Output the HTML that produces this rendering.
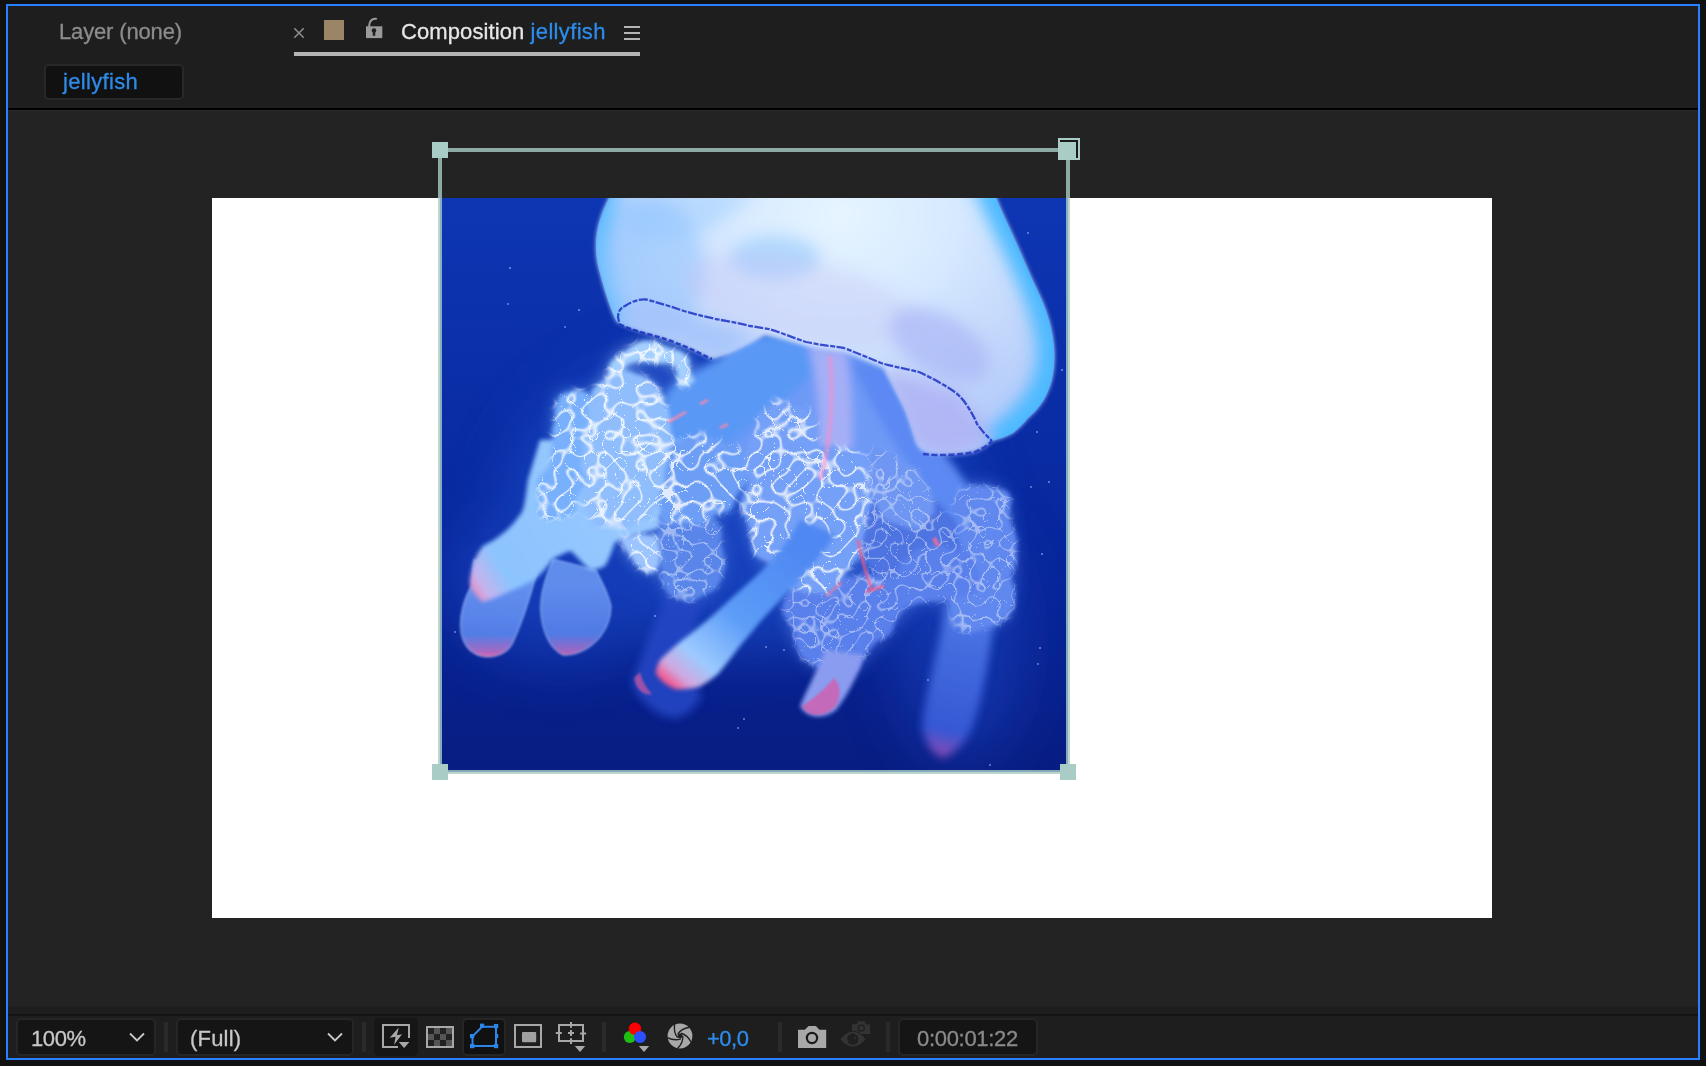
<!DOCTYPE html>
<html lang="en">
<head>
<meta charset="utf-8">
<title>Composition jellyfish</title>
<style>
html,body{margin:0;padding:0;}
body{width:1706px;height:1066px;background:#111111;overflow:hidden;position:relative;font-family:"Liberation Sans",sans-serif;}
.abs{position:absolute;}
#panel{left:6px;top:4px;width:1690px;height:1052px;border:2px solid #2680ff;background:#1e1e1e;}
#hline{left:8px;top:108px;width:1690px;height:2px;background:#000;}
#viewer{left:8px;top:110px;width:1690px;height:896px;background:#232323;}
#tbline{left:8px;top:1014px;width:1690px;height:2px;background:#141414;}
.t{position:absolute;white-space:nowrap;font-size:22px;line-height:26px;-webkit-text-stroke:0.3px currentColor;will-change:transform;}
#comp{left:212px;top:198px;width:1280px;height:720px;background:#ffffff;}
.box{position:absolute;box-sizing:border-box;border:2px solid #262626;border-radius:5px;background:#151515;}
.sep{position:absolute;width:4px;top:1022px;height:30px;background:#2a2a2a;}
.h{position:absolute;width:16px;height:16px;background:#a9ccc6;}
</style>
</head>
<body>
<div id="panel" class="abs"></div>

<!-- tab row -->
<div class="t" id="t_layer" style="left:59px;top:19px;color:#8c8c8c;letter-spacing:-0.15px;">Layer (none)</div>
<svg class="abs" style="left:290px;top:24px;" width="18" height="18" viewBox="290 24 18 18"><path d="M294.3 28.3 L303.7 37.7 M303.7 28.3 L294.3 37.7" stroke="#8c8c8c" stroke-width="1.6" fill="none"/></svg>
<div class="abs" style="left:324px;top:20px;width:20px;height:20px;background:#9a8666;"></div>
<svg class="abs" id="lock" style="left:364px;top:16px;" width="20" height="24" viewBox="364 16 20 24">
<path d="M369.3 27 V24.5 A6 6 0 0 1 376.9 18.9" stroke="#9a9a9a" stroke-width="2" fill="none"/>
<rect x="366" y="26.3" width="16.3" height="11.8" fill="#9a9a9a"/>
<circle cx="374" cy="30.5" r="2.3" fill="#1f1f1f"/><path d="M373 31 L372.6 35.8 H375.4 L375 31 Z" fill="#1f1f1f"/>
</svg>
<div class="t" id="t_comp" style="left:401px;top:19px;color:#e6e6e6;letter-spacing:0.1px;">Composition <span id="t_compj" style="color:#2d8ceb;letter-spacing:0.34px;">jellyfish</span></div>
<div class="abs" style="left:624px;top:26px;width:16px;height:2px;background:#b4b4b4;"></div>
<div class="abs" style="left:624px;top:32px;width:16px;height:2px;background:#b4b4b4;"></div>
<div class="abs" style="left:624px;top:38px;width:16px;height:2px;background:#b4b4b4;"></div>
<div class="abs" style="left:294px;top:52px;width:346px;height:4px;background:#b4b4b4;"></div>

<!-- breadcrumb -->
<div class="box" style="left:44px;top:64px;width:140px;height:36px;background:#111111;border-color:#282828;"></div>
<div class="t" id="t_jelly" style="left:62.5px;top:69px;color:#2d8ceb;letter-spacing:0.34px;">jellyfish</div>

<div id="hline" class="abs"></div>
<div id="viewer" class="abs"></div>
<div class="abs" style="left:8px;top:110px;width:1690px;height:1px;background:#2a2a2a;"></div>
<div id="comp" class="abs"></div>

<!-- IMAGE -->
<svg class="abs" id="img" style="left:440px;top:198px;" width="628" height="574" viewBox="440 198 628 574">
<defs>
<linearGradient id="bgG" x1="0" y1="0" x2="0" y2="1"><stop offset="0" stop-color="#0e36b3"/><stop offset="0.45" stop-color="#092ba3"/><stop offset="0.65" stop-color="#08259a"/><stop offset="1" stop-color="#081d82"/></linearGradient>
<radialGradient id="bellG" gradientUnits="userSpaceOnUse" cx="840" cy="215" r="330" gradientTransform="translate(840 215) scale(1 0.85) translate(-840 -215)">
<stop offset="0" stop-color="#e6f5ff"/><stop offset="0.35" stop-color="#d6e9ff"/><stop offset="0.6" stop-color="#c6dafc"/><stop offset="0.85" stop-color="#b4ccfb"/><stop offset="1" stop-color="#a8c4fa"/></radialGradient>
<linearGradient id="armAG" gradientUnits="userSpaceOnUse" x1="640" y1="500" x2="476" y2="600"><stop offset="0" stop-color="#98c8fe"/><stop offset="0.8" stop-color="#8cc4fe"/><stop offset="0.93" stop-color="#c4b4ee"/><stop offset="1" stop-color="#e888bc"/></linearGradient>
<linearGradient id="armBG" gradientUnits="userSpaceOnUse" x1="790" y1="540" x2="668" y2="682"><stop offset="0" stop-color="#4f88f2"/><stop offset="0.5" stop-color="#5c9cf8"/><stop offset="0.8" stop-color="#9ccaff"/><stop offset="0.93" stop-color="#d0a8e0"/><stop offset="1" stop-color="#f05a90"/></linearGradient>
<linearGradient id="armDG" gradientUnits="userSpaceOnUse" x1="970" y1="620" x2="940" y2="758"><stop offset="0" stop-color="#4a74e4"/><stop offset="0.8" stop-color="#3558d4"/><stop offset="1" stop-color="#9048b0"/></linearGradient>
<linearGradient id="footG" gradientUnits="userSpaceOnUse" x1="0" y1="585" x2="0" y2="656"><stop offset="0" stop-color="#6a98f4"/><stop offset="0.7" stop-color="#5a84ec"/><stop offset="0.93" stop-color="#b070c8"/><stop offset="1" stop-color="#e868b0"/></linearGradient>
<filter id="b1" x="-20%" y="-20%" width="140%" height="140%"><feGaussianBlur stdDeviation="1.2"/></filter>
<filter id="b2" x="-20%" y="-20%" width="140%" height="140%"><feGaussianBlur stdDeviation="2"/></filter>
<filter id="b4" x="-20%" y="-20%" width="140%" height="140%"><feGaussianBlur stdDeviation="4"/></filter>
<filter id="b8" x="-30%" y="-30%" width="160%" height="160%"><feGaussianBlur stdDeviation="8"/></filter>
<filter id="b30" x="-50%" y="-50%" width="200%" height="200%"><feGaussianBlur stdDeviation="30"/></filter>
<filter id="rough" x="-10%" y="-10%" width="120%" height="120%" color-interpolation-filters="sRGB">
<feTurbulence type="fractalNoise" baseFrequency="0.045" numOctaves="1" seed="11" result="n"/>
<feDisplacementMap in="SourceGraphic" in2="n" scale="18" xChannelSelector="R" yChannelSelector="G" result="d"/>
<feGaussianBlur in="d" stdDeviation="2"/>
</filter>
<filter id="veins" x="-10%" y="-10%" width="120%" height="120%" color-interpolation-filters="sRGB">
<feTurbulence type="fractalNoise" baseFrequency="0.045" numOctaves="1" seed="11" result="n"/>
<feDisplacementMap in="SourceGraphic" in2="n" scale="18" xChannelSelector="R" yChannelSelector="G" result="d"/>
<feGaussianBlur in="d" stdDeviation="3" result="db"/>
<feTurbulence type="turbulence" baseFrequency="0.068" numOctaves="1" seed="7" result="t"/>
<feColorMatrix in="t" type="matrix" values="0 0 0 0 1  0 0 0 0 1  0 0 0 0 1  -13 0 0 0 1.0" result="v"/>
<feComposite in="v" in2="db" operator="in"/>
</filter>
<filter id="veinsL" x="-10%" y="-10%" width="120%" height="120%" color-interpolation-filters="sRGB">
<feTurbulence type="fractalNoise" baseFrequency="0.045" numOctaves="1" seed="11" result="n"/>
<feDisplacementMap in="SourceGraphic" in2="n" scale="18" xChannelSelector="R" yChannelSelector="G" result="d"/>
<feGaussianBlur in="d" stdDeviation="3" result="db"/>
<feTurbulence type="turbulence" baseFrequency="0.06" numOctaves="1" seed="7" result="t"/>
<feColorMatrix in="t" type="matrix" values="0 0 0 0 1  0 0 0 0 1  0 0 0 0 1  -8.5 0 0 0 1.0" result="v"/>
<feComposite in="v" in2="db" operator="in"/>
</filter>
<g id="frLight">
<path d="M600 378 C600 352 622 340 646 340 C670 340 688 352 689 378 L676 384 C672 366 660 358 646 358 C630 358 618 366 616 384 Z" fill="#a4d0ff"/>
<path d="M552 392 C560 386 575 386 586 398 C584 420 580 450 576 480 C574 495 572 505 568 510 C555 518 540 518 530 508 C530 490 538 465 548 440 C548 425 548 405 552 392 Z" fill="#78b0fc"/>
<path d="M584 390 C592 374 612 368 630 372 C645 374 655 382 660 395 C664 410 664 425 665 450 C664 475 658 495 650 508 C636 522 610 526 590 520 C578 510 574 490 576 465 C578 440 580 410 586 394 Z" fill="#90befd"/>
<path d="M662 442 C680 432 710 430 735 445 C742 465 738 485 725 502 C705 518 680 526 655 522 C652 510 660 480 662 442 Z" fill="#6c9ef6"/>
<path d="M612 534 C620 550 630 566 646 568 C655 560 652 545 648 532 Z" fill="#9cc4ff"/>
<path d="M770 396 C750 410 738 440 738 470 C736 500 740 525 748 545 C760 570 780 588 800 592 C825 590 848 570 856 540 C862 510 868 480 862 455 C850 440 830 445 815 440 C812 420 800 400 770 396 Z" fill="#74a0f7"/>
</g>
<g id="frMid">
<path d="M852 505 C870 490 900 488 930 500 C950 510 960 535 960 560 C955 580 940 592 915 590 C890 588 870 575 858 555 C850 540 848 520 852 505 Z" fill="#4e74e2"/>
<path d="M958 488 C950 500 955 520 962 535 C956 560 950 590 946 614 C955 634 985 638 1008 616 C1018 580 1016 545 1010 515 C1012 500 1005 488 990 484 C978 482 966 484 958 488 Z" fill="#6088ee"/>
<path d="M790 586 C782 610 788 640 805 660 C820 672 840 676 852 674 C868 655 890 630 915 602 C935 604 965 600 978 585 C980 565 965 548 940 545 C915 545 900 560 893 578 C860 572 820 575 790 586 Z" fill="#5a80ec"/>
<path d="M660 514 C652 540 655 575 668 598 C685 610 708 600 720 580 C728 555 725 530 712 515 C695 505 675 506 660 514 Z" fill="#5a86ea"/>
<path d="M868 450 C862 470 866 500 880 520 C900 535 925 530 935 512 C930 490 915 465 895 452 Z" fill="#6f96f2"/>
</g>
<clipPath id="bellClip"><path id="bellP" d="M609 170 L609 198 C602 212 596 228 596 245 C596 258 598 266 600 273 C603 285 606 294 609 303 C612 311 614 317 617 322 C626 327 636 330 646 333 C660 337 672 341 684 346 C694 350 703 355 712 359 C722 356 732 352 740 348 C750 343 758 339 765 335 C780 338 793 342 806 346 C820 349 832 350 844 352 C857 357 870 362 883 368 C891 382 898 396 905 410 C909 420 912 430 915 440 C917 446 920 450 925 452 C931 455 939 455 947 455 C957 455 967 454 975 452 C982 449 988 445 992 441 C1000 439 1007 436 1013 433 C1019 428 1024 423 1028 418 C1034 413 1039 407 1043 401 C1046 396 1048 391 1050 386 C1054 374 1055 360 1054 348 C1053 335 1050 322 1046 311 C1042 299 1036 288 1031 277 C1025 263 1019 249 1013 236 C1007 223 1001 210 996 198 L996 170 Z"/></clipPath>
</defs>
<rect x="440" y="198" width="628" height="574" fill="url(#bgG)"/>
<!-- ambient glow -->
<g filter="url(#b30)" opacity="0.55">
<ellipse cx="740" cy="500" rx="230" ry="150" fill="#2458d8"/>
<ellipse cx="560" cy="580" rx="110" ry="80" fill="#1f4fd0"/>
<ellipse cx="960" cy="640" rx="60" ry="120" fill="#1a46c6"/>
</g>
<g filter="url(#b8)" opacity="0.55"><use href="#frLight" transform="translate(6 3)"/><use href="#frMid"/></g>
<!-- back arms -->
<g filter="url(#b4)">
<path d="M668 592 C655 620 640 660 632 684 C638 700 658 718 676 718 C690 714 700 704 701 694 C690 680 690 640 702 600 Z" fill="#2647c4" opacity="0.9"/>
<path d="M946 604 C940 645 926 690 922 728 C926 745 934 756 944 758 C956 752 966 742 972 728 C982 700 990 655 996 604 Z" fill="url(#armDG)"/>
</g>
<!-- underbody + upper arms -->
<g filter="url(#b4)">
<path d="M735 338 C715 360 692 395 696 425 C715 445 740 455 760 480 C790 505 840 505 880 485 C915 485 945 505 962 540 L992 545 C985 510 965 480 945 455 C925 430 905 395 885 358 C860 343 800 326 735 338 Z" fill="#6e9af6"/>
<path d="M772 332 C735 348 700 368 672 385 C662 395 658 420 660 455 C680 468 712 458 738 438 C772 412 812 378 834 354 Z" fill="#5a98f6"/>
<path d="M808 345 C820 390 822 430 815 470 C808 500 800 520 790 540 L826 545 C840 515 850 480 852 440 C853 405 850 375 846 350 Z" fill="#a8b0f6" opacity="0.95"/>
<path d="M850 360 C872 410 900 455 930 495 C945 515 955 535 960 560 L990 548 C985 515 970 490 950 465 C925 430 908 398 895 368 Z" fill="#5a88f2" opacity="0.95"/>
</g>
<g filter="url(#b1)"><path d="M474 560 L472 585 C463 600 459 618 461 632 C463 646 472 656 487 657 C500 657 510 651 514 640 C522 622 530 600 540 560 Z" fill="url(#footG)" opacity="0.92" stroke="#a8c8ff" stroke-opacity="0.55" stroke-width="1.6"/><path d="M553 559 C544 580 539 600 541 615 C543 633 550 649 563 655 C576 656 590 649 600 637 C608 627 611 616 611 606 C608 592 600 578 596 570 Z" fill="url(#footG)" opacity="0.88" stroke="#a8c8ff" stroke-opacity="0.55" stroke-width="1.6"/></g>
<g filter="url(#b2)"><path d="M540 440 L528 480 C526 495 525 505 522 512 C515 522 510 528 502 534 C495 540 488 543 483 546 C476 555 473 563 472 570 C470 577 470 581 470 585 C473 593 478 598 483 602 C492 599 500 596 506 593 C517 588 526 584 534 580 C542 573 548 566 553 559 C560 555 566 552 571 551 C578 558 584 565 590 570 C596 570 601 568 605 566 C610 558 612 550 615 542 C625 538 636 535 646 532 C660 528 670 524 680 520 L700 500 L700 440 Z" fill="url(#armAG)"/></g>
<!-- frills -->
<use href="#frMid" filter="url(#rough)"/>
<use href="#frMid" filter="url(#veins)" opacity="0.42"/>
<use href="#frLight" filter="url(#rough)" transform="translate(6 3)"/>
<use href="#frLight" filter="url(#veinsL)" opacity="0.8" transform="translate(6 3)"/>
<!-- front arms -->
<g filter="url(#b2)">
<path d="M800 520 C780 560 745 585 721 608 C700 628 680 640 661 659 C657 665 656 670 656 674 C662 682 668 686 675 689 C685 690 692 688 699 687 C708 682 713 678 718 674 C728 662 734 654 740 646 C748 636 754 630 759 623 C780 600 810 570 836 535 Z" fill="url(#armBG)"/>
<path d="M826 650 C816 672 806 692 800 706 C806 718 824 720 836 710 C848 695 858 675 864 655 Z" fill="#8a9cf0"/>
</g>
<!-- bell -->
<g filter="url(#b2)">
<use href="#bellP" fill="url(#bellG)"/>
</g>
<g clip-path="url(#bellClip)">
<g filter="url(#b8)">
<path d="M609 180 C596 230 592 260 604 300 L622 330" stroke="#58bcff" stroke-width="26" fill="none" opacity="0.9"/>
<path d="M988 180 C1020 250 1050 300 1054 348 C1056 390 1030 425 992 445" stroke="#48b8ff" stroke-width="34" fill="none" opacity="0.95"/>
<path d="M600 190 L760 190 L710 230 L640 240 Z" fill="#90c8ff" opacity="0.4"/>
<ellipse cx="650" cy="270" rx="55" ry="70" fill="#8cc4ff" opacity="0.5"/>
<ellipse cx="775" cy="258" rx="45" ry="22" fill="#8cc4fc" opacity="0.55"/>
<ellipse cx="800" cy="300" rx="120" ry="40" fill="#c9c8f6" opacity="0.4" transform="rotate(12 800 300)"/>
<ellipse cx="940" cy="345" rx="55" ry="30" fill="#a9b6f6" opacity="0.7" transform="rotate(30 940 345)"/>
<path d="M617 322 C650 334 690 348 720 362 L760 335 C720 322 680 310 646 300 L625 306 Z" fill="#a5c4fb" opacity="0.9"/>
<path d="M883 368 L915 446 L947 455 L992 441 C985 425 970 405 956 393 Z" fill="#b0b4f4" opacity="0.9"/>
</g>
</g>
<!-- rim lines -->
<g fill="none" stroke-linecap="butt">
<path d="M619 322 C616 314 620 308 625 306 C632 301 640 299 646 299.5 C660 303 672 307 684 311 C698 315 710 318 721 320 C732 322 742 324 750 326 C757 327 763 328 769 329 C782 333 794 338 806 342 C820 345 832 346 844 348 C857 353 869 358 881 363 C894 367 907 369 919 372 C932 378 945 385 956 393 C961 397 965 402 968 407 C972 413 975 419 977 424 C980 428 983 432 986 435 L992 441" stroke="#1c33c4" stroke-width="2.3" stroke-dasharray="9 1.6 5 1.4" opacity="0.85"/>
<path d="M619 324 C630 329 640 332 646 333.5 C660 337 672 341 684 346 C694 350 703 355 712 359" stroke="#1a2fc0" stroke-width="2.4" stroke-dasharray="5 2.5" opacity="0.85"/>
<path d="M923 454 C940 456 960 455 975 452 C982 449 988 445 992 441" stroke="#2436c4" stroke-width="2.6" stroke-dasharray="6 2.5" opacity="0.85"/>
</g>
<!-- pink accents -->
<g filter="url(#b1)">
<path d="M634 678 C636 690 644 696 652 694 C646 688 642 680 640 672 Z" fill="#d05aa0" opacity="0.7"/>
<path d="M802 706 C808 718 824 718 836 706 C842 694 840 684 834 678 C824 690 812 700 802 706 Z" fill="#d858a8" opacity="0.75"/>
<path d="M830 356 C834 400 830 450 820 480" stroke="#f090d0" stroke-width="5" fill="none" opacity="0.55"/>
<path d="M858 540 C862 560 866 575 872 590 M866 592 L884 586" stroke="#ff5a80" stroke-width="2.4" fill="none" opacity="0.85"/>
<path d="M842 582 L826 596" stroke="#ff6a90" stroke-width="2" fill="none" opacity="0.8"/>
<path d="M934 538 L938 546" stroke="#ff6a90" stroke-width="4" fill="none" opacity="0.85"/>
<path d="M668 422 L686 412 M700 404 L708 400 M720 428 L728 424" stroke="#ff8aa8" stroke-width="3" fill="none" opacity="0.8"/>
</g>
<!-- particles -->
<g fill="#9fc0ff" opacity="0.7">
<circle cx="510" cy="268" r="1"/><circle cx="579" cy="310" r="1"/><circle cx="508" cy="304" r="0.9"/><circle cx="565" cy="327" r="0.9"/><circle cx="1028" cy="233" r="0.9"/><circle cx="1062" cy="370" r="1"/><circle cx="1037" cy="432" r="1"/><circle cx="1049" cy="482" r="1"/><circle cx="1031" cy="487" r="0.9"/><circle cx="1042" cy="554" r="1"/><circle cx="766" cy="647" r="0.9"/><circle cx="784" cy="650" r="0.9"/><circle cx="1040" cy="648" r="1"/><circle cx="1038" cy="664" r="0.9"/><circle cx="655" cy="616" r="1"/><circle cx="455" cy="632" r="0.9"/><circle cx="744" cy="719" r="0.9"/><circle cx="738" cy="728" r="0.9"/><circle cx="928" cy="680" r="0.9"/><circle cx="990" cy="765" r="0.9"/>
</g>
</svg>

<!-- layer handles -->
<div class="abs" style="left:438px;top:148px;width:632px;height:626px;box-sizing:border-box;border:4px solid rgba(169,204,198,0.8);"></div>
<div class="h" style="left:432px;top:142px;"></div>
<div class="h" style="left:432px;top:764px;"></div>
<div class="h" style="left:1060px;top:764px;"></div>
<div class="abs" style="left:1058px;top:138px;width:22px;height:22px;box-sizing:border-box;border:2px solid #a9ccc6;background:#1a1a1a;"></div>
<div class="abs" style="left:1058px;top:142px;width:18px;height:18px;background:#a9ccc6;"></div>

<div id="tbline" class="abs"></div>

<!-- toolbar -->
<div class="box" style="left:16px;top:1018px;width:140px;height:38px;"></div>
<div class="t" id="t_100" style="left:30.5px;top:1025.5px;color:#c8c8c8;letter-spacing:-0.4px;">100%</div>
<div class="sep" style="left:164px;"></div>
<div class="box" style="left:176px;top:1018px;width:178px;height:38px;"></div>
<div class="t" id="t_full" style="left:190px;top:1025.5px;color:#c8c8c8;letter-spacing:0.2px;">(Full)</div>
<div class="sep" style="left:362px;"></div>
<div class="sep" style="left:602px;"></div>
<div class="t" id="t_exp" style="left:706.5px;top:1025.5px;color:#2d8ceb;letter-spacing:-0.5px;">+0,0</div>
<div class="sep" style="left:778px;"></div>
<div class="sep" style="left:886px;"></div>
<div class="box" style="left:898px;top:1018px;width:140px;height:38px;"></div>
<div class="t" id="t_tc" style="left:916.5px;top:1025.5px;color:#8a8a8a;letter-spacing:-0.3px;">0:00:01:22</div>
<svg class="abs" id="tbicons" style="left:0;top:1016px;" width="1706" height="42" viewBox="0 1016 1706 42">
<!-- chevrons -->
<path d="M130 1033.5 L137 1040.5 L144 1033.5 M328 1033.5 L335 1040.5 L342 1033.5" stroke="#c8c8c8" stroke-width="1.8" fill="none"/>
<!-- fast preview -->
<rect x="374" y="1018" width="44" height="38" rx="5" fill="#161616"/>
<path d="M398 1047 H383 V1025 H409 V1038" stroke="#a8a8a8" stroke-width="2" fill="none"/>
<polygon points="398.8,1027.4 389.7,1037.7 395.6,1036.8 394.1,1044.8 402,1034.2 396.9,1035.2" fill="#a8a8a8"/>
<polygon points="398.8,1042.1 409.4,1042.1 404.1,1048" fill="#a8a8a8"/>
<!-- transparency grid -->
<rect x="428" y="1028" width="6" height="6" fill="#222222"/><rect x="434" y="1028" width="6" height="6" fill="#555555"/><rect x="440" y="1028" width="6" height="6" fill="#222222"/><rect x="446" y="1028" width="6" height="6" fill="#555555"/><rect x="428" y="1034" width="6" height="6" fill="#555555"/><rect x="434" y="1034" width="6" height="6" fill="#222222"/><rect x="440" y="1034" width="6" height="6" fill="#555555"/><rect x="446" y="1034" width="6" height="6" fill="#222222"/><rect x="428" y="1040" width="6" height="6" fill="#222222"/><rect x="434" y="1040" width="6" height="6" fill="#555555"/><rect x="440" y="1040" width="6" height="6" fill="#222222"/><rect x="446" y="1040" width="6" height="6" fill="#555555"/>
<rect x="427" y="1027" width="26" height="20" stroke="#a8a8a8" stroke-width="2" fill="none"/>
<!-- mask path -->
<rect x="463" y="1019" width="42" height="36" rx="4" fill="#111111" stroke="#262626" stroke-width="2"/>
<path d="M472.5 1046 H496 V1026.8 H482 L472.5 1036.3 Z" stroke="#2d86ea" stroke-width="2" fill="none" stroke-linejoin="miter"/>
<g fill="#2d86ea"><rect x="470" y="1044" width="4.4" height="4.2"/><rect x="494" y="1044" width="4.2" height="4.2"/><rect x="494" y="1024" width="4.2" height="4.2"/><rect x="480" y="1023.6" width="4.2" height="4.2"/><rect x="470" y="1034" width="4.2" height="4.2"/><rect x="495" y="1034" width="3.2" height="4.2"/></g>
<!-- region -->
<rect x="515" y="1025" width="26" height="22" stroke="#a8a8a8" stroke-width="2" fill="none"/>
<rect x="522" y="1032" width="14.2" height="10.2" rx="1" fill="#a0a0a0"/>
<!-- grid guides -->
<rect x="559" y="1025" width="24" height="16" stroke="#a8a8a8" stroke-width="2" fill="none"/>
<path d="M571 1022 V1027.7 M571 1038.3 V1044 M555.8 1033 H561.8 M580.1 1033.5 H586.1 M571 1030 V1036 M568 1033 H574" stroke="#a8a8a8" stroke-width="2" fill="none"/>
<polygon points="574.8,1046 585.2,1046 580,1052" fill="#a8a8a8"/>
<!-- rgb -->
<circle cx="629.8" cy="1037.1" r="6" fill="#1fbf14"/>
<circle cx="635" cy="1028.8" r="6.2" fill="#ff0000"/>
<circle cx="640.1" cy="1037.1" r="6" fill="#2b50ff"/>
<polygon points="638.8,1046 649.2,1046 644,1052" fill="#a8a8a8"/>
<!-- aperture -->
<circle cx="680" cy="1036" r="12.4" fill="#a8a8a8"/>
<path d="M677.60 1037.60 Q673.40 1032.50 674.60 1024.40 M677.74 1034.21 Q681.29 1028.64 689.36 1027.28 M681.00 1033.29 Q687.40 1034.95 691.19 1042.21 M682.88 1036.12 Q683.28 1042.71 677.55 1048.56 M680.78 1038.78 Q674.63 1041.20 667.30 1037.55 " stroke="#1f1f1f" stroke-width="1.4" fill="none"/>
<polygon points="677.60,1037.60 677.74,1034.21 681.00,1033.29 682.88,1036.12 680.78,1038.78" fill="#1f1f1f"/>
<!-- camera -->
<path d="M798 1029.8 H804.8 L808.6 1026 H815.9 L819.4 1029.8 H826.2 V1048 H798 Z" fill="#a8a8a8"/>
<circle cx="812" cy="1038" r="5.1" stroke="#1a1a1a" stroke-width="2.2" fill="none"/>
<!-- show snapshot (disabled) -->
<path d="M852 1024.3 H856.6 L858.4 1021.3 H864.3 L866 1024.3 H870.1 V1034 H852 Z" fill="#333333"/>
<circle cx="861.3" cy="1028.2" r="3" stroke="#1f1f1f" stroke-width="1.2" fill="none"/>
<path d="M839.9 1039.3 Q852.9 1022.8 866 1039.3 Q852.9 1055 839.9 1039.3 Z" fill="#333333" stroke="#1f1f1f" stroke-width="1"/>
<circle cx="852.8" cy="1039.2" r="5.6" fill="#1f1f1f"/>
<circle cx="855" cy="1037.9" r="1" fill="#333333"/>
</svg>
</body>
</html>
